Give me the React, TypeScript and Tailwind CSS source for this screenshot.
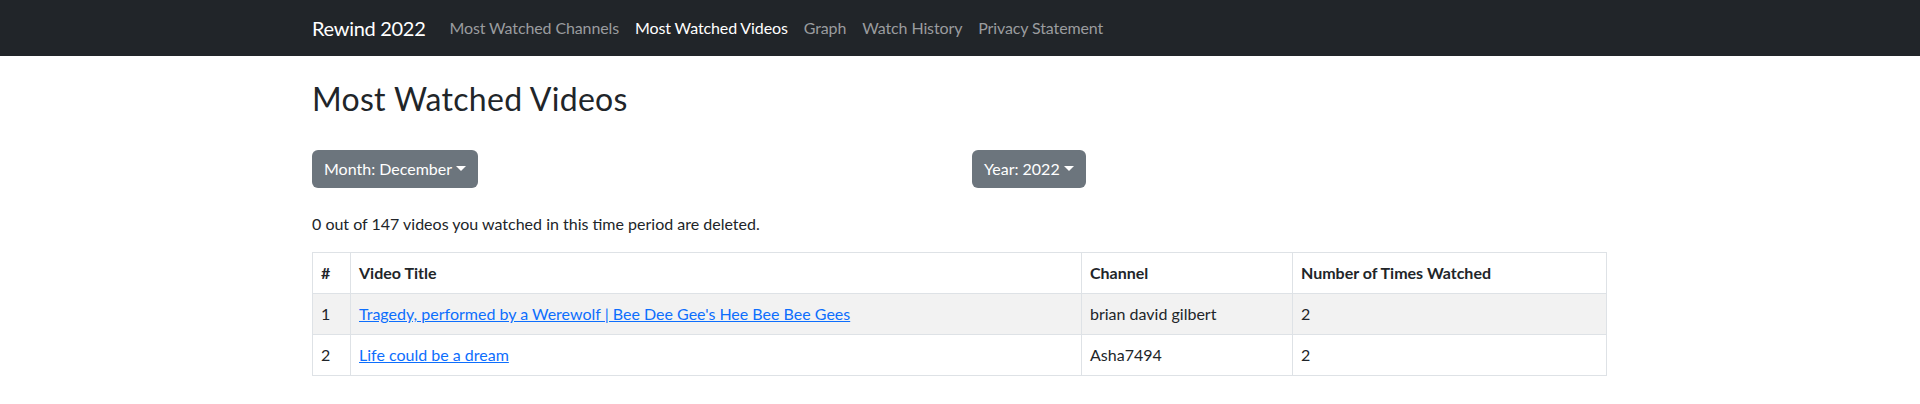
import React from "react";

const font = { fontFamily: "Lato, 'Noto Sans', 'Liberation Sans', sans-serif" };

function Caret() {
  return (
    <span className="ml-[4px] inline-block align-[4px] border-t-[5px] border-t-white border-x-[5px] border-x-transparent border-b-0" />
  );
}

export default function App() {
  const links = [
    { label: "Most Watched Channels", active: false },
    { label: "Most Watched Videos", active: true },
    { label: "Graph", active: false },
    { label: "Watch History", active: false },
    { label: "Privacy Statement", active: false },
  ];
  const rows = [
    { n: 1, title: "Tragedy, performed by a Werewolf | Bee Dee Gee's Hee Bee Bee Gees", channel: "brian david gilbert", times: 2 },
    { n: 2, title: "Life could be a dream", channel: "Asha7494", times: 2 },
  ];
  return (
    <div className="min-h-[404px] bg-white text-[#212529] text-[16px] leading-[24px]" style={font}>
      <nav className="bg-[#212529] h-[56px] flex items-center">
        <div className="w-[1296px] mx-auto flex items-center">
          <span className="text-white text-[20px] leading-[30px] mr-[16px] tracking-[-0.3px]">Rewind 2022</span>
          <div className="flex tracking-[-0.12px]">
            {links.map((l) => (
              <span key={l.label} className={`px-[8px] py-[8px] ${l.active ? "text-white" : "text-[#9a9c9f]"}`}>
                {l.label}
              </span>
            ))}
          </div>
        </div>
      </nav>
      <main className="w-[1296px] mx-auto pt-[24px]">
        <h2 className="text-[32px] leading-[38px] tracking-[0.3px]">Most Watched Videos</h2>
        <div className="grid grid-cols-2 gap-x-[24px] mt-[32px]">
          <div>
            <button className="bg-[#6c757d] text-white rounded-[6px] px-[12px] py-[7px] leading-[24px]">
              Month: December
              <Caret />
            </button>
          </div>
          <div>
            <button className="bg-[#6c757d] text-white rounded-[6px] px-[12px] py-[7px] leading-[24px]">
              Year: 2022
              <Caret />
            </button>
          </div>
        </div>
        <p className="mt-[24px] mb-[16px]">0 out of 147 videos you watched in this time period are deleted.</p>
        <table className="w-[1295px] border-collapse border border-[#dee2e6] text-left">
          <thead>
            <tr className="h-[41px]">
              <th className="w-[38px] border border-[#dee2e6] px-[8px] py-[8px] font-bold">#</th>
              <th className="w-[731px] border border-[#dee2e6] px-[8px] py-[8px] font-bold">Video Title</th>
              <th className="w-[211px] border border-[#dee2e6] px-[8px] py-[8px] font-bold">Channel</th>
              <th className="border border-[#dee2e6] px-[8px] py-[8px] font-bold">Number of Times Watched</th>
            </tr>
          </thead>
          <tbody>
            {rows.map((r, i) => (
              <tr key={r.n} className={`h-[41px] ${i % 2 === 0 ? "bg-[#f2f2f2]" : "bg-white"}`}>
                <td className="border border-[#dee2e6] px-[8px] py-[8px]">{r.n}</td>
                <td className="border border-[#dee2e6] px-[8px] py-[8px]">
                  <a href="#" className="text-[#0d6efd] underline">{r.title}</a>
                </td>
                <td className="border border-[#dee2e6] px-[8px] py-[8px]">{r.channel}</td>
                <td className="border border-[#dee2e6] px-[8px] py-[8px]">{r.times}</td>
              </tr>
            ))}
          </tbody>
        </table>
      </main>
    </div>
  );
}
